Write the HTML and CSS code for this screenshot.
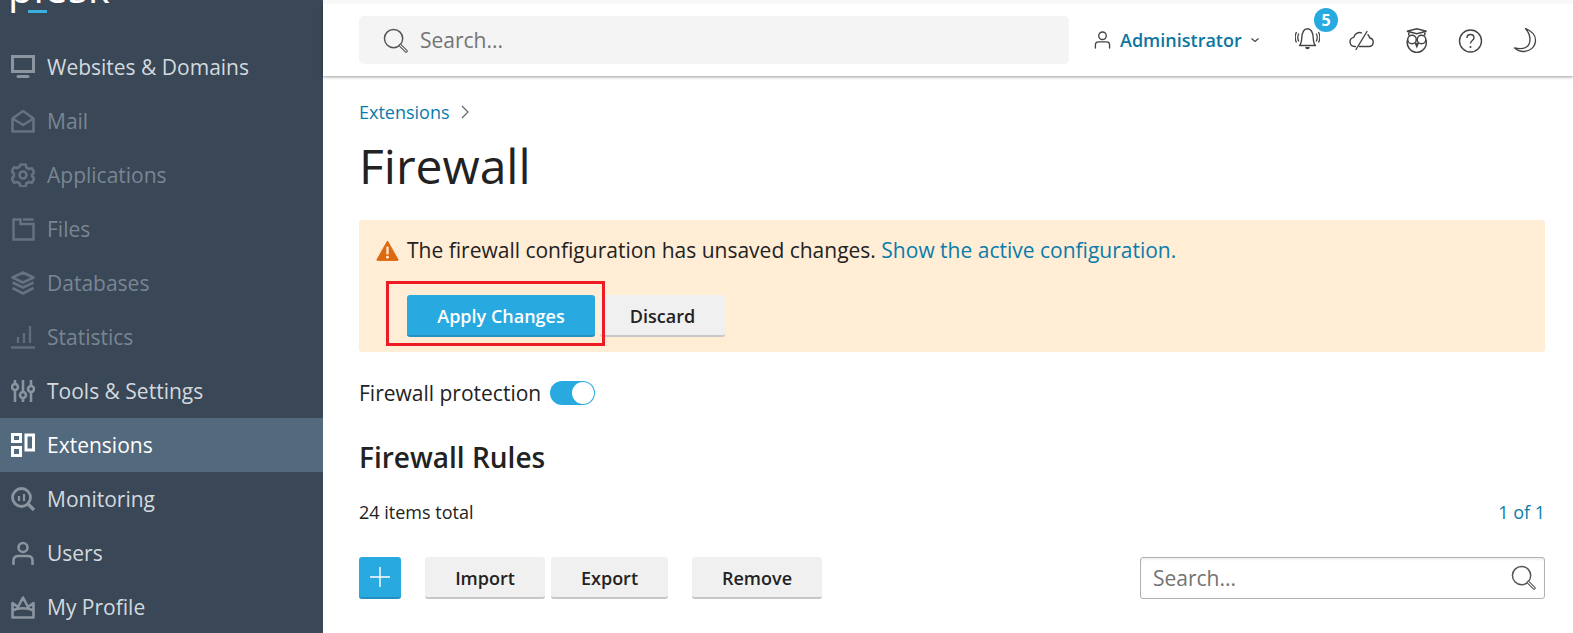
FILE: index.html
```html
<!DOCTYPE html>
<html lang="en">
<head>
<meta charset="utf-8">
<title>Firewall</title>
<link rel="stylesheet" href="styles.css">
</head>
<body>
<div class="app">
  <aside class="sidebar">
    <div class="logo"><span class="logo-text">plesk</span><span class="logo-bar"></span></div>
    <nav class="nav">
      <a class="nav-item"><svg class="nav-icon" viewBox="0 0 24 24"><path d="M1.500 1.500h21v15h-21z" fill="none" stroke="currentColor" stroke-width="3"/><path d="M7 21.500h10" stroke="currentColor" stroke-width="3" stroke-linecap="round"/></svg><span>Websites &amp; Domains</span></a>
      <a class="nav-item dim"><svg class="nav-icon" viewBox="0 0 24 24"><path d="M1.500 9.500 12 2l10.500 7.500V22.500h-21z M1.500 9.500 12 16l10.500-6.500" fill="none" stroke="currentColor" stroke-width="2.600" stroke-linejoin="round"/></svg><span>Mail</span></a>
      <a class="nav-item dim"><svg class="nav-icon" viewBox="0 0 24 24"><path d="M9.500 1.500h5l.8 3 2.600 1.500 3-.8 2.400 4.300-2.200 2.200v1.600l2.200 2.200-2.400 4.300-3-.8-2.600 1.500-.8 3h-5l-.8-3-2.600-1.500-3 .8L.7 15.500l2.200-2.200v-2.600L.7 8.500l2.400-4.300 3 .8 2.600-1.500z" fill="none" stroke="currentColor" stroke-width="2.600" stroke-linejoin="round"/><circle cx="12" cy="12" r="3.500" fill="none" stroke="currentColor" stroke-width="2.600"/></svg><span>Applications</span></a>
      <a class="nav-item dim"><svg class="nav-icon" viewBox="0 0 24 24"><path d="M2.500 2.500h7V7h13v15.500h-20z M12 2.500h10.500" fill="none" stroke="currentColor" stroke-width="2.400"/></svg><span>Files</span></a>
      <a class="nav-item dim"><svg class="nav-icon" viewBox="0 0 24 24"><path d="M12 1.500 22.500 6.500 12 11.500 1.500 6.500z M1.500 11.500 12 16.500l10.500-5 M1.500 17 12 22.500 22.500 17" fill="none" stroke="currentColor" stroke-width="2.600" stroke-linejoin="round"/></svg><span>Databases</span></a>
      <a class="nav-item dimmer"><svg class="nav-icon" viewBox="0 0 24 24"><path d="M7 18v-6M13 18V8M19 18V1M0 22.500h24" fill="none" stroke="currentColor" stroke-width="2.400"/></svg><span>Statistics</span></a>
      <a class="nav-item"><svg class="nav-icon" viewBox="0 0 24 24"><g fill="none" stroke="currentColor" stroke-width="2.600"><path d="M4 1v4M4 11v12M12 1v12M12 19v4M20 1v6M20 13v10"/><circle cx="4" cy="8" r="3"/><circle cx="12" cy="16" r="3"/><circle cx="20" cy="10" r="3"/></g></svg><span>Tools &amp; Settings</span></a>
      <a class="nav-item active"><svg class="nav-icon" viewBox="0 0 24 24"><g fill="none" stroke="currentColor" stroke-width="3"><path d="M1.500 1.500h8v7h-8z M1.500 14.500h8v8h-8z M15 2h7.500v15H15z"/></g></svg><span>Extensions</span></a>
      <a class="nav-item"><svg class="nav-icon" viewBox="0 0 24 24"><circle cx="10.500" cy="10.500" r="9" fill="none" stroke="currentColor" stroke-width="2.800"/><path d="M17 17l6 6" stroke="currentColor" stroke-width="3.400"/><path d="M8 9v5M13 7v7" stroke="currentColor" stroke-width="2.200"/></svg><span>Monitoring</span></a>
      <a class="nav-item"><svg class="nav-icon" viewBox="0 0 24 24"><circle cx="12" cy="6.500" r="4.500" fill="none" stroke="currentColor" stroke-width="2.600"/><path d="M2.500 23v-3.500c0-3 2-4.500 5-4.500h9c3 0 5 1.500 5 4.500V23" fill="none" stroke="currentColor" stroke-width="2.600" stroke-linecap="round"/></svg><span>Users</span></a>
      <a class="nav-item"><svg class="nav-icon" viewBox="0 0 24 24"><path d="M1.500 8 7 12l5-9.500L17 12l5.500-4v14.500h-21z M1.500 15.500c6-3 15-3 21 0" fill="none" stroke="currentColor" stroke-width="2.600" stroke-linejoin="round"/></svg><span>My Profile</span></a>
    </nav>
  </aside>
  <div class="main">
    <header class="topbar">
      <div class="global-search">
        <svg class="search-icon" viewBox="0 0 26 26"><circle cx="11" cy="11" r="9.500" fill="none" stroke="currentColor" stroke-width="1.500"/><path d="M18 18l6 6" stroke="currentColor" stroke-width="3.400" stroke-linecap="round"/><path d="M18 18l6 6" stroke="#f4f4f4" stroke-width="1.200" stroke-linecap="round"/></svg>
        <span class="placeholder">Search...</span>
      </div>
      <div class="user">
        <svg class="user-icon" viewBox="0 0 18 20"><circle cx="9" cy="5.500" r="4" fill="none" stroke="currentColor" stroke-width="1.400"/><path d="M1.500 18.500V15c0-2 1.500-3 3.500-3h8c2 0 3.500 1 3.500 3v3.500" fill="none" stroke="currentColor" stroke-width="1.400" stroke-linecap="round"/></svg>
        <span class="user-name">Administrator</span>
        <svg class="caret" viewBox="0 0 10 6"><path d="M1.500 1.500 5 4.500l3.500-3" fill="none" stroke="currentColor" stroke-width="1.200"/></svg>
      </div>
      <div class="tools">
        <span class="tool">
          <svg viewBox="0 0 25 25"><path d="M4.500 17.500c1.500-1.500 2-3.500 2.200-7C7 5 8.500 .8 12.500 .8s5.500 4.200 5.800 9.700c.2 3.500.7 5.500 2.200 7z" fill="none" stroke="currentColor" stroke-width="1.400" stroke-linejoin="round"/><path d="M10.200 19h4.600a2.300 2.300 0 0 1-4.600 0z" fill="currentColor"/><path d="M3.800 5.500c-1.300 2.500-1.300 5.500 0 8M1.500 4c-1.500 3-1.500 7.500 0 10.500M21.200 5.500c1.300 2.500 1.300 5.500 0 8M23.500 4c1.500 3 1.500 7.500 0 10.500" fill="none" stroke="currentColor" stroke-width="1.300"/></svg>
          <span class="badge">5</span>
        </span>
        <span class="tool"><svg viewBox="0 0 25 25"><path d="M6.500 18.500H5.500a4.600 4.600 0 0 1-.8-9.100C5.800 6 9 3.700 12.500 4.800M10.500 18.500h9.500a4.300 4.300 0 0 0 .8-8.500c-.4-1.300-1-2.300-1.800-3.200M7 21.500 18 3.500" fill="none" stroke="currentColor" stroke-width="1.400" stroke-linecap="round"/></svg></span>
        <span class="tool"><svg viewBox="0 0 25 25"><g fill="none" stroke="currentColor" stroke-width="1.500"><path d="M3 3.200 12.800.8l9.700 2.400-9.700 2.600z"/><path d="M4.800 4.500v3M20.800 4.500v3"/><circle cx="8" cy="11.500" r="4.300"/><circle cx="17.500" cy="11.500" r="4.300"/><path d="M3.500 12c-1.500 6.500 3 12 9.300 12.500 6.300-.5 10.800-6 9.200-12.500"/><path d="M11.500 15.500l1.300 3 1.300-3z" fill="currentColor"/></g></svg></span>
        <span class="tool"><svg viewBox="0 0 25 25"><circle cx="12.500" cy="13" r="11" fill="none" stroke="currentColor" stroke-width="1.400"/><path d="M9 10c0-2 1.500-3.500 3.500-3.500s3.500 1.500 3.500 3.300c0 2.700-3.500 2.700-3.500 5.700" fill="none" stroke="currentColor" stroke-width="1.400"/><circle cx="12.500" cy="19" r="1.100" fill="currentColor"/></svg></span>
        <span class="tool"><svg viewBox="0 0 25 25"><path d="M12.500 .5c6 2.500 10 6.500 10 11.500 0 7-5.500 11.500-12 11.500-3.500 0-6.500-1.200-9-3.500 9 2 15.500-.5 15.500-8.500 0-4.500-2-8-4.500-11z" fill="none" stroke="currentColor" stroke-width="1.300" stroke-linejoin="round"/></svg></span>
      </div>
    </header>
    <main class="content">
      <div class="breadcrumb"><a class="link">Extensions</a><svg class="crumb-sep" viewBox="0 0 8 14"><path d="M1 1l6 6-6 6" fill="none" stroke="currentColor" stroke-width="1.200"/></svg></div>
      <h1 class="title">Firewall</h1>
      <section class="alert">
        <p class="alert-text"><svg class="warn" viewBox="0 0 24 22"><path d="M12 1 23 20.500a.6.6 0 0 1-.5.9H1.500a.6.6 0 0 1-.5-.9z" fill="#dd6a10" stroke="#dd6a10" stroke-linejoin="round"/><path d="M12 7v8" stroke="#ffedd6" stroke-width="2.400"/><circle cx="12" cy="18" r="1.500" fill="#ffedd6"/></svg>The firewall configuration has unsaved changes. <a class="link">Show the active configuration.</a></p>
        <div class="alert-actions">
          <button class="btn primary apply">Apply Changes</button>
          <button class="btn discard">Discard</button>
          <span class="highlight"></span>
        </div>
      </section>
      <div class="protection"><span>Firewall protection</span><span class="switch"><span class="knob"></span></span></div>
      <h2 class="subtitle">Firewall Rules</h2>
      <div class="summary"><span>24 items total</span><a class="link">1 of 1</a></div>
      <div class="toolbar">
        <button class="btn primary add"><svg viewBox="0 0 20 20"><path d="M10 0v20M0 10h20" stroke="#fff" stroke-width="1.400"/></svg></button>
        <button class="btn import">Import</button>
        <button class="btn export">Export</button>
        <button class="btn remove">Remove</button>
        <div class="list-search">
          <span class="placeholder">Search...</span>
          <svg class="search-icon" viewBox="0 0 26 26"><circle cx="11" cy="11" r="9.500" fill="none" stroke="currentColor" stroke-width="1.500"/><path d="M18 18l6 6" stroke="currentColor" stroke-width="3.400" stroke-linecap="round"/><path d="M18 18l6 6" stroke="#fff" stroke-width="1.200" stroke-linecap="round"/></svg>
        </div>
      </div>
    </main>
  </div>
</div>
</body>
</html>
```
FILE: styles.css
```css
* { box-sizing: border-box; }
html, body { margin: 0; height: 100%; overflow: hidden; }
body { font-family: "Open Sans", "Noto Sans", sans-serif; color: #222; background: #fff; }
.app { display: flex; height: 633px; }

.sidebar { width: 323px; flex: none; background: #394757; overflow: hidden; display: flex; flex-direction: column; }
.logo { height: 40px; flex: none; padding-left: 8px; position: relative; overflow: hidden; }
.logo-text { display: block; font-size: 41px; line-height: 40px; margin-top: -33px; color: #fff; font-weight: 400; letter-spacing: .5px; }
.logo-bar { position: absolute; left: 28px; top: 10px; width: 19px; height: 3px; background: #3cb0dc; }
.nav { display: flex; flex-direction: column; flex: none; }
.nav-item { height: 54px; display: flex; align-items: center; gap: 12px; padding-left: 11px; font-size: 21px; color: #d4d9de; }
.nav-icon { width: 24px; height: 24px; flex: none; color: #8b95a0; }
.nav-item.dim, .nav-item.dimmer { color: #7a8592; }
.nav-item.dim .nav-icon { color: #667280; }
.nav-item.dimmer .nav-icon { color: #5f6c7a; }
.nav-item.active { background: #53697d; color: #fff; }
.nav-item.active .nav-icon { color: #fff; }

.main { flex: 1; min-width: 0; display: flex; flex-direction: column; background: #fff; }
.topbar { height: 72px; margin-top: 4px; flex: none; display: flex; align-items: center; padding: 0 0 0 36px; background: #fff; box-shadow: 0 -4px 0 #f8f8f8, 0 1px 3px rgba(0,0,0,.4); }
.global-search { width: 710px; height: 48px; flex: none; background: #f4f4f4; border-radius: 5px; display: flex; align-items: center; padding-left: 24px; gap: 12px; }
.search-icon { width: 25px; height: 25px; flex: none; color: #555; }
.placeholder { font-size: 21px; color: #737373; }
.user { display: flex; align-items: center; flex: none; margin-left: 25px; width: 186px; color: #444; }
.user-icon { width: 17px; height: 20px; flex: none; }
.user-name { font-size: 18px; font-weight: 600; color: #0d76a0; margin-left: 9px; }
.caret { width: 10px; height: 6px; margin-left: 8px; color: #444; }
.tools { display: flex; align-items: center; flex: none; }
.tool { width: 54.5px; height: 30px; display: flex; justify-content: center; align-items: center; position: relative; color: #444; }
.tool svg { width: 25px; height: 25px; }
.badge { position: absolute; left: 34px; top: -17px; width: 24px; height: 24px; border-radius: 50%; background: #28aae1; color: #fff; font-size: 16px; font-weight: 700; display: flex; align-items: center; justify-content: center; }

.content { padding: 0 28px 0 36px; }
.link { color: #0a7cab; }
.breadcrumb { display: flex; align-items: center; gap: 11px; font-size: 18px; line-height: 24px; margin-top: 24px; }
.crumb-sep { width: 8px; height: 14px; color: #666; }
.title { font-size: 48px; font-weight: 400; line-height: 64px; margin: 10px 0 22px; color: #222; }
.alert { background: #ffedd6; border-radius: 3px; height: 132px; padding: 15px 17px; }
.alert-text { margin: 0; font-size: 21px; line-height: 30px; display: flex; align-items: center; white-space: pre; }
.warn { width: 23px; height: 21px; margin-right: 8px; flex: none; }
.alert-actions { display: flex; gap: 5px; margin: 30px 0 0 31px; position: relative; }
.btn { border: 0; border-bottom: 2px solid #c7c7c7; border-radius: 3px; background: #f0f0f0; font-family: inherit; font-size: 18px; font-weight: 600; height: 42px; padding: 2px 0 0; color: #222; }
.btn.primary { background: #28aae1; border-bottom-color: #2390bf; color: #fff; }
.apply { width: 188px; }
.discard { width: 125px; }
.highlight { position: absolute; left: -21px; top: -14px; width: 219px; height: 65px; border: 3px solid #ed1c24; }
.protection { display: flex; align-items: center; gap: 9px; font-size: 21px; height: 30px; margin-top: 26px; }
.switch { width: 45px; height: 24px; border-radius: 12px; background: #28aae1; position: relative; display: block; }
.knob { position: absolute; right: 1px; top: 1px; width: 22px; height: 22px; border-radius: 50%; background: #fff; }
.subtitle { font-size: 28px; font-weight: 600; line-height: 38px; margin: 30px 0 0; color: #222; }
.summary { display: flex; justify-content: space-between; font-size: 18px; line-height: 24px; margin-top: 24px; }
.toolbar { display: flex; align-items: flex-start; margin-top: 33px; }
.add { width: 42px; display: flex; align-items: center; justify-content: center; padding: 0; }
.add svg { width: 20px; height: 20px; }
.import { width: 120px; margin-left: 24px; }
.export { width: 117px; margin-left: 6px; }
.remove { width: 130px; margin-left: 24px; }
.list-search { margin-left: auto; width: 405px; height: 42px; border: 1px solid #b0b0b0; border-radius: 3px; display: flex; align-items: center; justify-content: space-between; padding: 0 8px 1px 12px; box-shadow: inset 0 2px 2px rgba(0,0,0,.06); }
```
